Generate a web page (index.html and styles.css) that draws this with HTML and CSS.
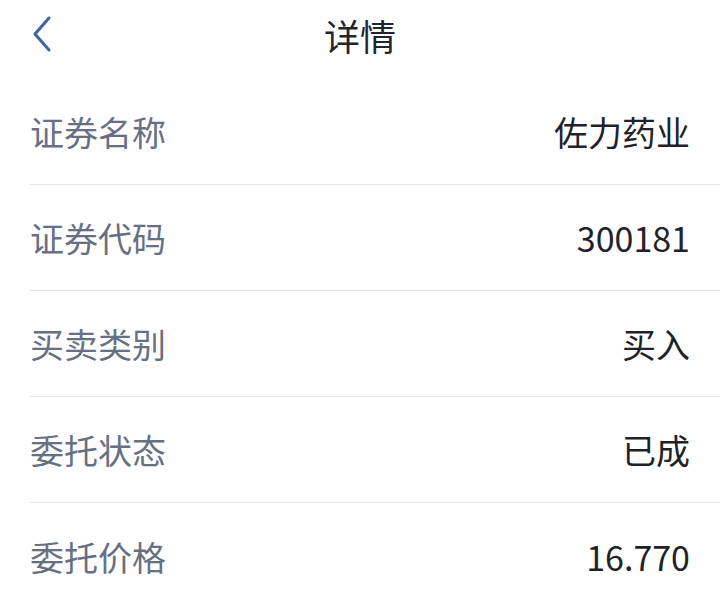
FILE: index.html
```html
<!DOCTYPE html>
<html lang="zh-CN">
<head>
<meta charset="utf-8">
<title>详情</title>
<link rel="stylesheet" href="styles.css">
</head>
<body>
<header class="topbar">
  <button class="back" aria-label="返回">
    <svg width="24" height="40" viewBox="0 0 24 40"><path d="M19 4 L5 20 L19 36" fill="none" stroke="#3d63a0" stroke-width="3" stroke-linecap="round" stroke-linejoin="round"/></svg>
  </button>
  <h1 class="title">详情</h1>
</header>
<main class="list">
  <div class="row"><span class="label">证券名称</span><span class="value">佐力药业</span></div>
  <div class="row"><span class="label">证券代码</span><span class="value">300181</span></div>
  <div class="row"><span class="label">买卖类别</span><span class="value">买入</span></div>
  <div class="row"><span class="label">委托状态</span><span class="value">已成</span></div>
  <div class="row"><span class="label">委托价格</span><span class="value">16.770</span></div>
</main>
</body>
</html>
```
FILE: styles.css
```css
* { box-sizing: border-box; }
html, body {
  margin: 0;
  padding: 0;
  background: #ffffff;
  font-family: "Noto Sans CJK SC", "Noto Sans", sans-serif;
}
.topbar {
  position: relative;
  height: 79px;
  display: flex;
  align-items: center;
  justify-content: center;
}
.back {
  position: absolute;
  left: 30px;
  top: 14px;
  padding: 0;
  border: 0;
  background: none;
  display: flex;
}
.title {
  margin: 0;
  margin-top: -10px;
  font-size: 36px;
  font-weight: 400;
  color: #22252c;
}
.list {
  padding-left: 30px;
}
.row {
  height: 106px;
  display: flex;
  align-items: center;
  justify-content: space-between;
  padding-right: 30px;
  border-bottom: 1px solid #e6e6e8;
}
.row:last-child { border-bottom: 0; }
.label {
  font-size: 34px;
  color: #677083;
}
.value {
  font-size: 34px;
  color: #1f2229;
}
```
